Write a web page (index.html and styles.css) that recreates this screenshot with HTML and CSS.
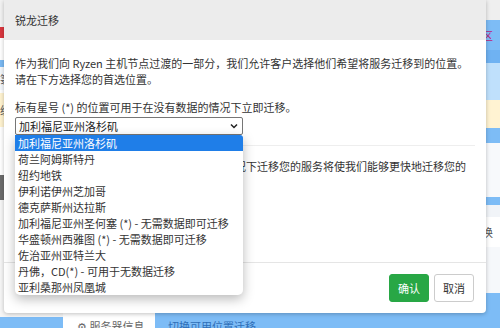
FILE: index.html
```html
<!DOCTYPE html>
<html lang="zh-CN">
	<head>
		<meta charset="UTF-8">
		<meta name="viewport" content="width=device-width, initial-scale=1.0">
		<title>锐龙迁移</title>
		<link rel="stylesheet" href="styles.css">
	</head>
	<body>
		<!-- 背后的页面 -->
		<div class="page">
			<div class="page-top">
				<div class="col col-left">
					<div class="blk" style="height:27px;background:#f2f2f2"></div>
					<div class="blk" style="height:11px;background:#d9363e"></div>
					<div class="blk" style="height:22px;background:#fff"></div>
					<div class="blk" style="height:7px;background:#7ab9f3"></div>
					<div class="blk txt" style="height:23px;background:#f3f7fb">箓</div>
					<div class="blk" style="height:3px;background:#fff"></div>
					<div class="blk txt" style="height:34px;background:#fff3d0">级</div>
					<div class="blk" style="height:48px;background:#fff"></div>
					<div class="blk" style="height:25px;background:#6b6b6b"></div>
					<div class="blk fill" style="background:#f6f6f6"></div>
				</div>
				<div class="col col-mid"></div>
				<div class="col col-right">
					<div class="blk" style="height:20px;background:#efefef"></div>
					<div class="blk txt pink" style="height:30px;background:#7dbcf6">专区</div>
					<div class="blk" style="height:13px;background:#6fb2f2"></div>
					<div class="blk" style="height:37px;background:#bfe0fc"></div>
					<div class="blk" style="height:28px;background:#fff3d2"></div>
					<div class="blk" style="height:15px;background:#7dbcf6"></div>
					<div class="blk" style="height:54px;background:#f7f9fc"></div>
					<div class="blk" style="height:8px;background:#7dbcf6"></div>
					<div class="blk" style="height:12px;background:#f1f4f8"></div>
					<div class="blk txt" style="height:30px;background:#fff">切换</div>
					<div class="blk" style="height:46px;background:#f6f8fb"></div>
					<div class="blk fill" style="background:#7dbcf6"></div>
				</div>
			</div>
			<div class="tabbar">
				<div class="tab-left"></div>
				<div class="tab active">⚙ 服务器信息</div>
				<div class="tab rest">切换可用位置迁移</div>
			</div>
		</div>

		<!-- 弹窗 -->
		<div class="modal">
			<div class="modal-header">锐龙迁移</div>
			<div class="modal-body">
				<p class="para">作为我们向 Ryzen 主机节点过渡的一部分，我们允许客户选择他们希望将服务迁移到的位置。<br>请在下方选择您的首选位置。</p>
				<p class="para tight">标有星号 (*) 的位置可用于在没有数据的情况下立即迁移。</p>
				<div class="select-wrap">
					<div class="select">
						<span>加利福尼亚州洛杉矶</span>
						<svg width="8" height="6" viewBox="0 0 8 6"><path d="M1 1.5 L4 4.5 L7 1.5" fill="none" stroke="#222" stroke-width="1.5"/></svg>
					</div>
					<!-- 下拉列表 -->
					<ul class="options">
						<li class="on">加利福尼亚州洛杉矶</li>
						<li>荷兰阿姆斯特丹</li>
						<li>纽约地铁</li>
						<li>伊利诺伊州芝加哥</li>
						<li>德克萨斯州达拉斯</li>
						<li>加利福尼亚州圣何塞 (*) - 无需数据即可迁移</li>
						<li>华盛顿州西雅图 (*) - 无需数据即可迁移</li>
						<li>佐治亚州亚特兰大</li>
						<li>丹佛，CD(*) - 可用于无数据迁移</li>
						<li>亚利桑那州凤凰城</li>
					</ul>
				</div>
				<div class="line"></div>
				<p class="para">另外，选择标有星号的位置并在没有数据的情况下迁移您的服务将使我们能够更快地迁移您的服务。</p>
			</div>
			<div class="modal-footer">
				<button class="btn btn-ok">确认</button>
				<button class="btn btn-cancel">取消</button>
			</div>
		</div>
	</body>
</html>
```

FILE: styles.css
```css
* {
	margin: 0;
	padding: 0;
	box-sizing: border-box;
}

body {
	width: 500px;
	height: 328px;
	overflow: hidden;
	position: relative;
	font-family: "Noto Sans CJK SC", "Noto Sans", sans-serif;
	font-size: 11px;
	color: #333;
}

/* 背后的页面 */
.page {
	display: flex;
	flex-direction: column;
	height: 328px;
}

.page-top {
	display: flex;
	height: 313px;
}

.col {
	display: flex;
	flex-direction: column;
}

.col-left {
	width: 60px;
}

.col-mid {
	flex: 1;
	background: #fff;
}

.col-right {
	width: 30px;
}

.blk {
	flex-shrink: 0;
	overflow: hidden;
	white-space: nowrap;
}

.blk.fill {
	flex: 1;
}

.blk.txt {
	display: flex;
	align-items: center;
	color: #555;
	font-size: 11px;
}

.col-right .blk.txt {
	padding-left: 1px;
}

.pink {
	color: #b8257a !important;
}

.tabbar {
	display: flex;
	height: 15px;
	background: #7dbcf6;
}

.tab-left {
	width: 63px;
	border-top: 4px solid #f6f6f6;
}

.tab {
	padding-top: 5px;
	line-height: 16px;
	white-space: nowrap;
	overflow: hidden;
}

.tab.active {
	width: 92px;
	background: #fff;
	color: #666;
	padding-left: 14px;
}

.tab.rest {
	color: #2f6fb8;
	padding-left: 13px;
}

/* 弹窗 */
.modal {
	position: absolute;
	left: 4px;
	top: 0;
	width: 482px;
	height: 313px;
	background: #fff;
	border-radius: 0 0 4px 4px;
	box-shadow: 0 1px 4px rgba(0, 0, 0, .25);
	display: flex;
	flex-direction: column;
}

.modal-header {
	height: 40px;
	line-height: 41px;
	padding-left: 11px;
	background: #ececec;
	color: #333;
}

.modal-body {
	flex: 1;
	padding: 15px 11px 0 11px;
}

.para {
	line-height: 16px;
	margin-bottom: 12px;
}

.para.tight {
	margin-bottom: 2px;
}

.select-wrap {
	position: relative;
	width: 228px;
}

.select {
	height: 18px;
	border: 1px solid #767676;
	border-radius: 2px;
	display: flex;
	align-items: center;
	justify-content: space-between;
	padding: 0 4px 0 3px;
	font-size: 11px;
	color: #222;
}

.options {
	list-style: none;
	position: absolute;
	left: 0;
	top: 100%;
	width: 228px;
	background: #fff;
	border-radius: 0 0 5px 5px;
	box-shadow: 0 4px 12px rgba(0, 0, 0, .28);
	z-index: 5;
}

.options li {
	height: 16px;
	line-height: 16px;
	padding-left: 3px;
	white-space: nowrap;
	color: #333;
}

.options li.on {
	background: #1f7ee8;
	color: #fff;
	border-radius: 0 3px 0 0;
}

.line {
	height: 1px;
	background: #eee;
	margin: 10px 0 12px 0;
}

.modal-footer {
	height: 51px;
	border-top: 1px solid #e5e5e5;
	display: flex;
	justify-content: flex-end;
	align-items: flex-start;
	gap: 5px;
	padding: 11px 12px 0 0;
}

.btn {
	width: 40px;
	height: 28px;
	border-radius: 3px;
	font-family: "Noto Sans CJK SC", "Noto Sans", sans-serif;
	font-size: 11px;
	cursor: pointer;
}

.btn-ok {
	background: #28a745;
	border: 1px solid #28a745;
	color: #fff;
}

.btn-cancel {
	background: #fff;
	border: 1px solid #ccc;
	color: #333;
}
```
